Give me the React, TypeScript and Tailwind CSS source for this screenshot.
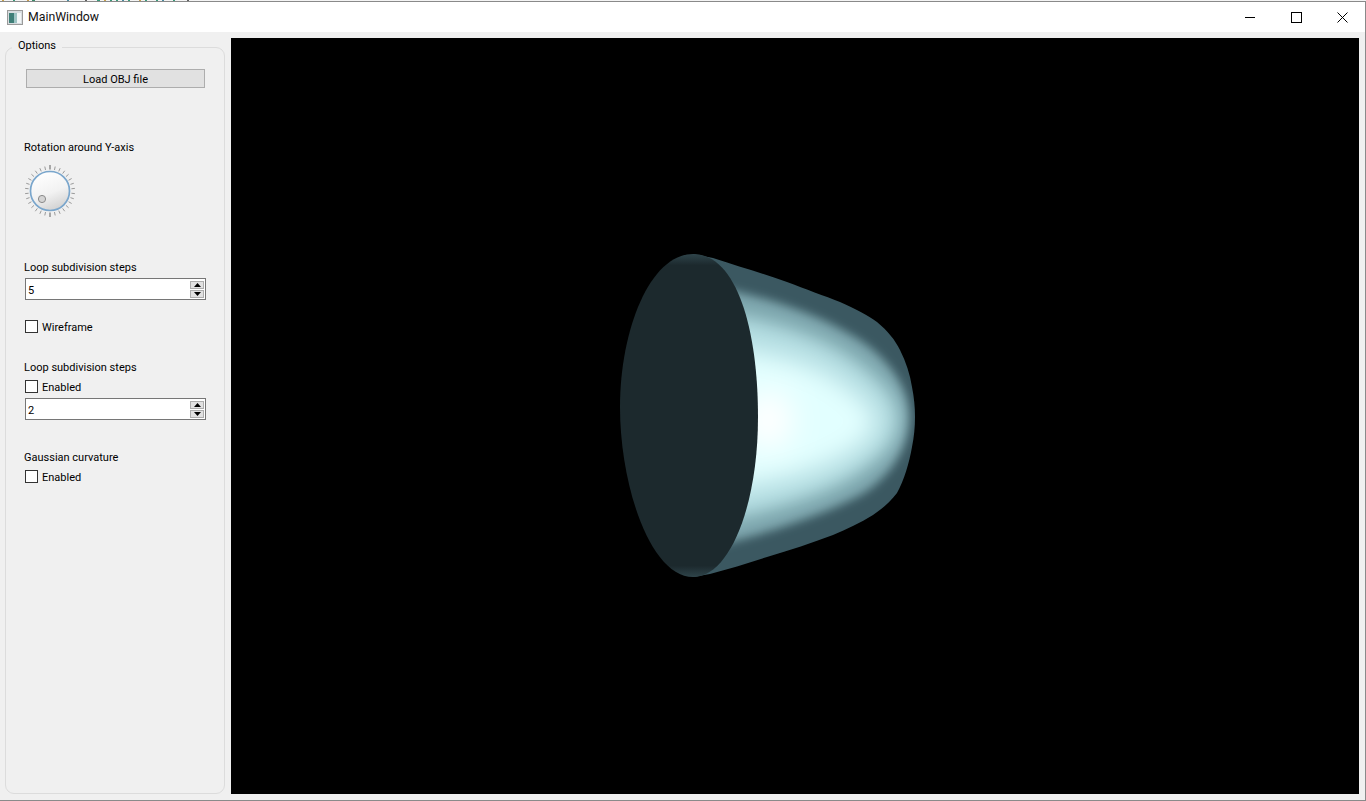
import React from "react";

const strip: [number, string][] = [
  [2, "#f4f4f4"], [2, "#c9a24a"], [9, "#f4f4f4"], [2, "#3a9a7a"], [12, "#f4f4f4"], [2, "#c99a4a"], [3, "#f4f4f4"], [3, "#3a8a6a"], [32, "#f4f4f4"], [2, "#4a8aa0"], [16, "#f4f4f4"], [2, "#606060"], [10, "#f4f4f4"], [3, "#3a9a7a"], [4, "#f4f4f4"], [2, "#c9a24a"], [4, "#f4f4f4"], [2, "#3a9a7a"], [4, "#f4f4f4"], [2, "#3a9a7a"], [4, "#f4f4f4"], [2, "#4a8aa0"], [4, "#f4f4f4"], [2, "#3a9a7a"], [9, "#f4f4f4"], [2, "#c9a24a"], [4, "#f4f4f4"], [2, "#3a9a7a"], [9, "#f4f4f4"], [2, "#3a9a7a"], [4, "#f4f4f4"], [2, "#4a8aa0"], [9, "#f4f4f4"], [2, "#3a9a7a"], [12, "#f4f4f4"], [2, "#606060"],
];

const bodyPath =
  "M693 254 L713 258 C740 267 765 274 787 282 C805 289 825 296 840 302 C855 309 868 315 877 322 C888 331 895 340 900 350 C906 362 910 374 912 387 C914 397 915 407 915 417 C915 427 914 437 912 447 C909 464 904 480 897 493 C890 502 882 509 873 515 C860 523 847 529 833 535 C812 543 790 550 767 557 C748 563 729 569 710 574 L693 577 Z";

const capPath =
  "M693 254 C650 254 620 330 620 407 C620 485 650 577 693 577 C730 577 758 505 758 417 C758 330 737 254 693 254 Z";

function Label({ children, className }: { children: React.ReactNode; className: string }) {
  return <div className={`h-4 leading-[18px] text-black -ml-px ${className}`}>{children}</div>;
}

function Spin({ value, className }: { value: string; className: string }) {
  return (
    <div className={`h-[22px] w-[181px] border border-[#767676] bg-white flex items-center justify-between pl-[2px] pr-px ${className}`}>
      <span className="leading-4 translate-y-[2px]">{value}</span>
      <div className="flex flex-col gap-px">
        <div className="w-[14px] h-[8px] bg-[#e1e1e1] border border-[#adadad] flex items-center justify-center">
          <svg width="7" height="4" viewBox="0 0 7 4"><path d="M3.5 0 L7 4 L0 4 Z" fill="#000" /></svg>
        </div>
        <div className="w-[14px] h-[8px] bg-[#e1e1e1] border border-[#adadad] flex items-center justify-center">
          <svg width="7" height="4" viewBox="0 0 7 4"><path d="M0 0 L7 0 L3.5 4 Z" fill="#000" /></svg>
        </div>
      </div>
    </div>
  );
}

function Check({ label, className }: { label: string; className: string }) {
  return (
    <div className={`h-[13px] flex items-center ${className}`}>
      <div className="w-[13px] h-[13px] border border-[#333333] bg-white shrink-0" />
      <span className="ml-1 leading-4 translate-y-px">{label}</span>
    </div>
  );
}

function Dial() {
  const ticks = Array.from({ length: 30 }, (_, i) => i * 12);
  return (
    <svg width="50" height="50" viewBox="0 0 50 50" className="mt-[11px] block overflow-visible">
      <defs>
        <linearGradient id="dialFill" x1="0.3" y1="0" x2="0.7" y2="1">
          <stop offset="0" stopColor="#ffffff" />
          <stop offset="0.55" stopColor="#f2f2f2" />
          <stop offset="1" stopColor="#cfcfcf" />
        </linearGradient>
      </defs>
      {ticks.map((a) => {
        const major = a === 0 || a === 180;
        const r = (a * Math.PI) / 180;
        const r1 = 21.5;
        const r2 = major ? 26 : 25;
        return (
          <line
            key={a}
            x1={25 + r1 * Math.sin(r)}
            y1={25 - r1 * Math.cos(r)}
            x2={25 + r2 * Math.sin(r)}
            y2={25 - r2 * Math.cos(r)}
            stroke={major ? "#5f5f5f" : "#9a9a9a"}
            strokeWidth="1"
          />
        );
      })}
      <circle cx="25" cy="25" r="19.5" fill="url(#dialFill)" stroke="#7aa6cc" strokeWidth="1.7" />
      <circle cx="17" cy="33" r="3.6" fill="#d4d4d4" stroke="#8a8a8a" strokeWidth="1" />
    </svg>
  );
}

export default function App() {
  return (
    <div className="w-[1366px] h-[801px] overflow-hidden flex flex-col bg-[#f0f0f0] text-[11px] text-black font-['Roboto',sans-serif]">
      <div className="h-px flex shrink-0 bg-[#f4f4f4]">
        {strip.map(([w, c], i) => (
          <div key={i} style={{ width: w, backgroundColor: c }} />
        ))}
      </div>
      <div className="flex-1 flex flex-col border-t border-[#8a8a8a] border-r border-b min-h-0">
        <div className="h-[30px] shrink-0 bg-white flex items-center pl-[7px]">
          <svg width="16" height="15" viewBox="0 0 16 15" className="block mt-[1px]">
            <rect x="0.5" y="0.5" width="15" height="14" fill="#d8dde0" stroke="#9a9a9a" />
            <rect x="2" y="3" width="5" height="10" fill="#3f7f78" />
            <rect x="7" y="3" width="3" height="10" fill="#9fc4c4" />
            <rect x="10" y="3" width="4" height="10" fill="#f2f6f7" />
          </svg>
          <span className="ml-[5px] text-[#111111] text-[12.3px] leading-4">MainWindow</span>
          <div className="ml-auto flex items-center">
            <div className="w-[46px] h-[30px] flex items-center justify-center">
              <svg width="10" height="10" viewBox="0 0 10 10"><path d="M0 5.5 H10" stroke="#000" strokeWidth="1" /></svg>
            </div>
            <div className="w-[46px] h-[30px] flex items-center justify-center">
              <svg width="11" height="11" viewBox="0 0 11 11"><rect x="0.5" y="0.5" width="10" height="10" fill="none" stroke="#000" strokeWidth="1" /></svg>
            </div>
            <div className="w-[46px] h-[30px] flex items-center justify-center">
              <svg width="11" height="11" viewBox="0 0 11 11"><path d="M0.5 0.5 L10.5 10.5 M10.5 0.5 L0.5 10.5" stroke="#000" strokeWidth="1" /></svg>
            </div>
          </div>
        </div>

        <div className="flex-1 flex min-h-0 pl-[5px]">
          <div className="relative w-[220px] h-[747px] mt-[15px] border border-[#dcdcdc] rounded-[9px] pl-[19px] shrink-0 flex flex-col">
            <div className="absolute -top-[10px] left-[6px] px-[6px] bg-[#f0f0f0] leading-4 h-4">Options</div>
            <div className="ml-px mt-[21px] w-[179px] h-[19px] bg-[#e1e1e1] border border-[#adadad] flex items-center justify-center">
              <span className="leading-4 translate-y-px">Load OBJ file</span>
            </div>
            <Label className="mt-[51px]">Rotation around Y-axis</Label>
            <Dial />
            <Label className="mt-[43px]">Loop subdivision steps</Label>
            <Spin value="5" className="mt-[3px]" />
            <Check label="Wireframe" className="mt-[20px]" />
            <Label className="mt-[26px]">Loop subdivision steps</Label>
            <Check label="Enabled" className="mt-[5px]" />
            <Spin value="2" className="mt-[5px]" />
            <Label className="mt-[29px]">Gaussian curvature</Label>
            <Check label="Enabled" className="mt-[5px]" />
          </div>

          <div className="ml-[6px] mt-[6px] w-[1128px] h-[756px] bg-black shrink-0">
            <svg width="1128" height="756" viewBox="231 38 1128 756" className="block">
              <defs>
                <clipPath id="bodyClip"><path d={bodyPath} /></clipPath>
                <filter id="b4" x="-30%" y="-30%" width="160%" height="160%"><feGaussianBlur stdDeviation="5" /></filter>
                <filter id="b8" x="-30%" y="-30%" width="160%" height="160%"><feGaussianBlur stdDeviation="9" /></filter>
                <filter id="b12" x="-30%" y="-30%" width="160%" height="160%"><feGaussianBlur stdDeviation="13" /></filter>
                <filter id="b16" x="-60%" y="-60%" width="220%" height="220%"><feGaussianBlur stdDeviation="15" /></filter>
                <linearGradient id="capEdge" x1="0" y1="0" x2="0" y2="1">
                  <stop offset="0" stopColor="#2f444a" />
                  <stop offset="0.035" stopColor="#1c292d" />
                  <stop offset="0.965" stopColor="#1c292d" />
                  <stop offset="1" stopColor="#2f444a" />
                </linearGradient>
              </defs>
              <path d={bodyPath} fill="#3b5861" />
              <g clipPath="url(#bodyClip)">
                <path
                  d="M720 288 C770 298 815 313 855 337 C885 355 909 385 909 417 C909 452 885 483 855 498 C815 518 770 532 720 545 Z"
                  fill="#7aa3aa"
                  filter="url(#b4)"
                />
                <path
                  d="M720 312 C775 320 820 335 852 358 C880 378 899 398 899 418 C899 442 880 460 850 479 C815 499 770 512 720 522 Z"
                  fill="#b0dadf"
                  filter="url(#b8)"
                />
                <path
                  d="M710 345 C770 350 815 362 845 385 C865 400 876 410 876 421 C876 435 865 444 845 456 C810 475 770 486 710 492 Z"
                  fill="#e2ffff"
                  filter="url(#b12)"
                />
                <ellipse cx="768" cy="420" rx="25" ry="30" fill="#ffffff" filter="url(#b16)" />
              </g>
              <path d={capPath} fill="url(#capEdge)" />
            </svg>
          </div>
        </div>
      </div>
    </div>
  );
}
